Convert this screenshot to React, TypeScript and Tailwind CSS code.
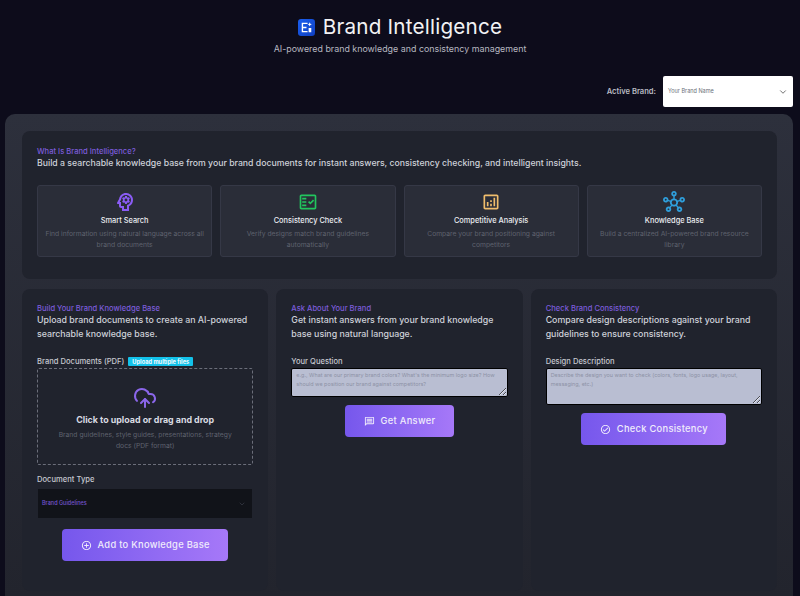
import type { ReactNode } from "react";
import { ChevronDown, CloudUpload } from "lucide-react";
import {
  MdOutlineAddCircleOutline,
  MdOutlineAnalytics,
  MdOutlineCheckCircle,
  MdOutlineFactCheck,
  MdOutlineHub,
  MdOutlineMessage,
  MdOutlinePsychology,
} from "react-icons/md";

const features = [
  {
    title: "Smart Search",
    text: "Find information using natural language across all brand documents",
    icon: <MdOutlinePsychology className="h-[24px] w-[24px] text-[#8b5cf6]" />,
  },
  {
    title: "Consistency Check",
    text: "Verify designs match brand guidelines automatically",
    icon: <MdOutlineFactCheck className="h-[20px] w-[20px] text-[#22c55e]" />,
  },
  {
    title: "Competitive Analysis",
    text: "Compare your brand positioning against competitors",
    icon: <MdOutlineAnalytics className="h-[20px] w-[20px] text-[#f0bd6c]" />,
  },
  {
    title: "Knowledge Base",
    text: "Build a centralized AI-powered brand resource library",
    icon: <MdOutlineHub className="h-[22px] w-[22px] text-[#2f9fdc]" />,
  },
];

function Logo() {
  return (
    <svg viewBox="0 0 16 16" className="h-[17px] w-[17px]">
      <defs>
        <linearGradient id="logo" x1="0" y1="0" x2="1" y2="1">
          <stop offset="0" stopColor="#1a5ff0" />
          <stop offset="1" stopColor="#0f3fc0" />
        </linearGradient>
      </defs>
      <rect width="16" height="16" rx="3" fill="url(#logo)" />
      <path d="M3.500 3.500h5.500v1.300H4.800v2.500H8v1.300H4.800v2.600H9v1.300H3.500z" fill="#fff" />
      <path d="M10 8.500h2.500v4H10zM11 3l.6 1.400 1.400.6-1.400.6-.6 1.400-.6-1.400-1.400-.6 1.400-.6z" fill="#fff" />
    </svg>
  );
}

function Heading({ label, text }: { label: string; text: string }) {
  return (
    <>
      <div className="text-[7.6px] leading-[12px] font-medium text-[#7c5cdb]">{label}</div>
      <p className="mt-[-2px] text-[8.8px] leading-[14px] font-medium text-[#cfd2da]">{text}</p>
    </>
  );
}

function Column({ children }: { children: ReactNode }) {
  return <section className="flex-1 rounded-[8px] bg-[#20232d] px-[15px] pt-[14px]">{children}</section>;
}

function Action({ icon, label, className }: { icon: ReactNode; label: string; className: string }) {
  return (
    <button
      className={`mx-auto flex h-[32px] items-center justify-center gap-[6px] rounded-[4px] bg-gradient-to-r from-[#7657ec] to-[#a678f8] text-[9.3px] font-medium tracking-[0.3px] text-[#f0ecfb] ${className}`}
    >
      {icon}
      {label}
    </button>
  );
}

function Question({ label, hint, rows }: { label: string; hint: string; rows: string }) {
  return (
    <>
      <div className="mt-[15px] text-[7.6px] leading-[12px] font-medium text-[#c6c8d0]">{label}</div>
      <textarea
        readOnly
        placeholder={hint}
        className={`block w-full rounded-[2px] border border-black bg-[#b9bed2] px-[4px] py-[2px] text-[5.450px] leading-[8.5px] outline-none placeholder:text-[#8d92a6] ${rows}`}
      />
    </>
  );
}

export default function App() {
  return (
    <div
      className="flex h-[596px] w-[800px] flex-col overflow-hidden bg-[#0d0c1b] pt-[14px] text-white"
      style={{ fontFamily: "Inter, 'Liberation Sans', sans-serif" }}
    >
      <header className="flex flex-col items-center">
        <div className="flex items-center gap-[8px]">
          <Logo />
          <h1 className="text-[20.7px] leading-[26px] font-normal tracking-[0.2px] text-[#f2f2f4]">Brand Intelligence</h1>
        </div>
        <p className="mt-[3px] text-[8.9px] leading-[12px] text-[#b7b8c0]">
          AI-powered brand knowledge and consistency management
        </p>
      </header>

      <div className="mt-[21px] flex items-center justify-end gap-[7px] pr-[7px]">
        <span className="text-[7.6px] font-semibold text-[#b9bac2]">Active Brand:</span>
        <div className="flex h-[31px] w-[130px] items-center justify-between rounded-[2px] bg-white px-[5px] text-[5.500px] text-[#6b6e78]">
          <span>Your Brand Name</span>
          <ChevronDown className="h-[10px] w-[10px] text-[#555]" />
        </div>
      </div>

      <main className="mt-[7px] mr-[7px] ml-[5px] flex flex-1 flex-col gap-[10px] rounded-t-[10px] bg-gradient-to-b from-[#2d303c] to-[#22242d] pt-[17px] pr-[16px] pb-[5px] pl-[17px]">
        <section className="rounded-[8px] bg-[#20232d] px-[15px] pt-[15px] pb-[22px]">
          <div className="text-[7.6px] leading-[12px] font-medium text-[#7c5cdb]">What Is Brand Intelligence?</div>
          <p className="mt-[-2px] text-[8.72px] leading-[14px] font-medium text-[#cfd2da]">
            Build a searchable knowledge base from your brand documents for instant answers, consistency checking, and intelligent insights.
          </p>
          <div className="mt-[15px] flex gap-[8px]">
            {features.map((f) => (
              <div
                key={f.title}
                className="flex h-[72px] flex-1 flex-col items-center rounded-[3px] border border-[#353846] bg-[#2a2d38] px-[7px] pt-[6px] text-center"
              >
                <div className="flex h-[20px] items-center justify-center">{f.icon}</div>
                <div className="mt-[3px] text-[7.4px] leading-[11px] font-medium text-[#eceef2]">{f.title}</div>
                <div className="mt-[2px] text-[6.750px] leading-[11px] text-[#5f626e]">{f.text}</div>
              </div>
            ))}
          </div>
        </section>

        <div className="flex flex-1 gap-[8px]">
          <Column>
            <Heading
              label="Build Your Brand Knowledge Base"
              text="Upload brand documents to create an AI-powered searchable knowledge base."
            />
            <div className="mt-[14px] flex h-[13px] items-center gap-[4px]">
              <span className="text-[7.6px] font-medium text-[#c6c8d0]">Brand Documents (PDF)</span>
              <span className="rounded-[1px] bg-[#13c2ea] px-[4px] text-[5.7px] leading-[9px] font-bold text-[#f2fbff]">
                Upload multiple files
              </span>
            </div>
            <div className="flex h-[97px] flex-col items-center rounded-[2px] border border-dashed border-[#6b6e7a] px-[15px] pt-[17px] text-center">
              <CloudUpload className="h-[24px] w-[24px] text-[#8b66ea]" strokeWidth={2} />
              <div className="mt-[3px] text-[8.9px] leading-[14px] font-bold text-[#d9dbe2]">
                Click to upload or drag and drop
              </div>
              <div className="mt-[2px] text-[6.750px] leading-[11px] text-[#5f626e]">
                Brand guidelines, style guides, presentations, strategy docs (PDF format)
              </div>
            </div>
            <div className="mt-[9px] text-[7.6px] leading-[12px] font-medium text-[#c6c8d0]">Document Type</div>
            <div className="mx-[1px] mt-[3px] flex h-[29px] items-center justify-between bg-[#111319] px-[4px] text-[5.500px] font-medium text-[#7453cf]">
              <span>Brand Guidelines</span>
              <ChevronDown className="mr-[2px] h-[8px] w-[8px] text-[#3d404b]" />
            </div>
            <div className="mt-[11px]">
              <Action
                className="w-[166px]"
                label="Add to Knowledge Base"
                icon={<MdOutlineAddCircleOutline className="h-[11px] w-[11px]" />}
              />
            </div>
          </Column>

          <Column>
            <Heading
              label="Ask About Your Brand"
              text="Get instant answers from your brand knowledge base using natural language."
            />
            <Question
              label="Your Question"
              hint="e.g., What are our primary brand colors? What's the minimum logo size? How should we position our brand against competitors?"
              rows="h-[29px]"
            />
            <div className="mt-[8px]">
              <Action
                className="w-[109px]"
                label="Get Answer"
                icon={<MdOutlineMessage className="h-[11px] w-[11px]" />}
              />
            </div>
          </Column>

          <Column>
            <Heading
              label="Check Brand Consistency"
              text="Compare design descriptions against your brand guidelines to ensure consistency."
            />
            <Question
              label="Design Description"
              hint="Describe the design you want to check (colors, fonts, logo usage, layout, messaging, etc.)"
              rows="h-[37px]"
            />
            <div className="mt-[8px]">
              <Action
                className="w-[145px]"
                label="Check Consistency"
                icon={<MdOutlineCheckCircle className="h-[11px] w-[11px]" />}
              />
            </div>
          </Column>
        </div>
      </main>
    </div>
  );
}
